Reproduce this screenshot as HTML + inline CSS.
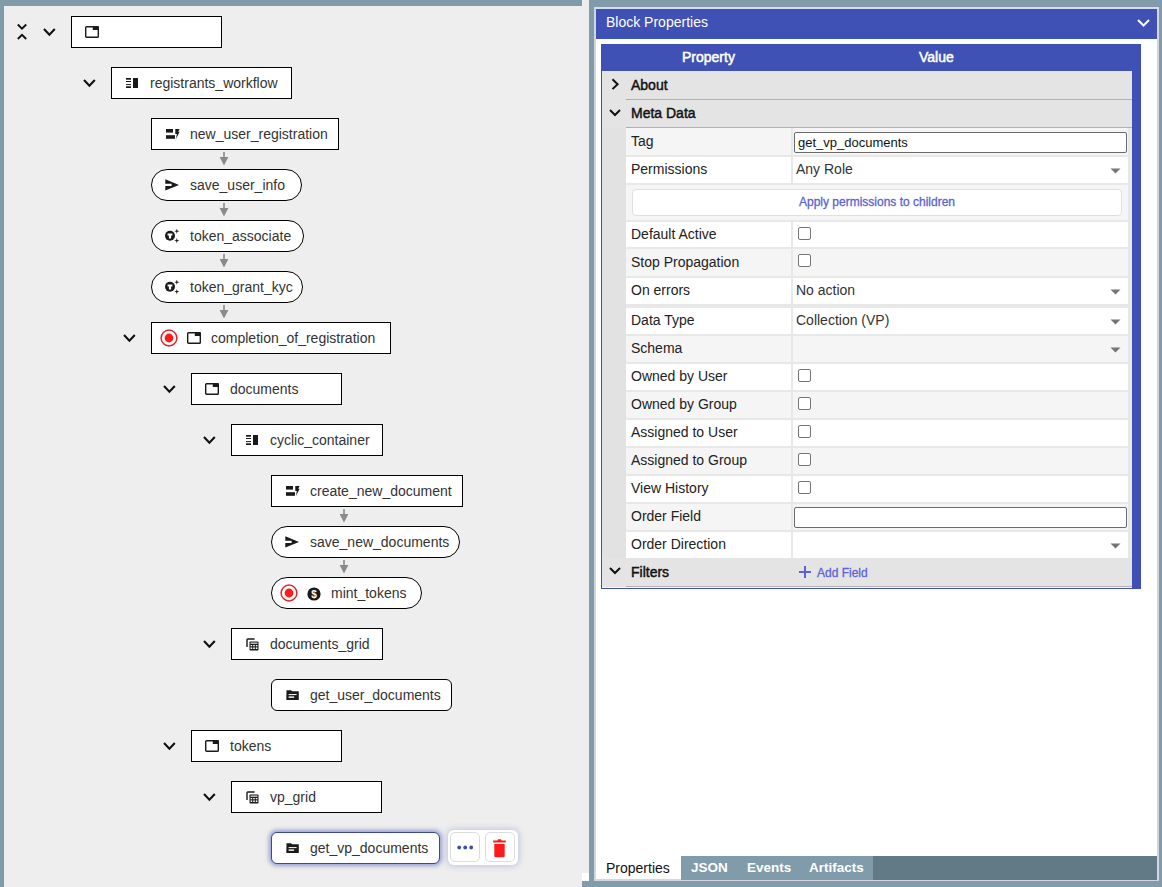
<!DOCTYPE html>
<html><head><meta charset="utf-8"><style>
*{box-sizing:border-box;margin:0;padding:0}
html,body{width:1162px;height:887px;overflow:hidden}
body{background:#809ba9;font-family:"Liberation Sans",sans-serif;position:relative;color:#333}
.abs{position:absolute}
#left{position:absolute;left:4px;top:6px;width:578px;height:881px;background:#eee}
#strip{position:absolute;left:582px;top:0;width:7px;height:873px;background:#eee}
#corner{position:absolute;left:582px;top:873px;width:7px;height:8px;background:#fff}
.node{position:absolute;height:32px;border:1px solid #000;background:#fff;font-size:14px;color:#333;white-space:nowrap}
.node .t{position:absolute;top:7px;line-height:16px}
.pill{border-radius:16px}
.r6{border-radius:6px}
.sel{border:1.5px solid #3a489e;box-shadow:0 0 4px 2px rgba(63,81,181,0.5)}
</style></head><body>
<div id="left"></div><div id="strip"></div><div id="corner"></div>
<div class="node " style="left:71px;top:16px;width:151px"><svg class="abs" style="left:13px;top:9px" width="14" height="12" viewBox="0 0 14 12"><rect x="0.7" y="0.7" width="12.6" height="10.6" rx="0.9" fill="none" stroke="#1a1a1a" stroke-width="1.4"/><rect x="7.8" y="0.2" width="6" height="3.8" fill="#1a1a1a"/></svg></div>
<svg class="abs" style="left:42.8px;top:28.2px" width="12.8" height="8.8" viewBox="0 0 12.8 8.8"><path d="M1 1 L6.4 6.8 L11.8 1" fill="none" stroke="#111" stroke-width="2.1"/></svg>
<div class="node " style="left:111px;top:67px;width:181px"><svg class="abs" style="left:14px;top:10px" width="13" height="10" viewBox="0 0 13 10"><rect x="0" y="0" width="5" height="1.7" fill="#1a1a1a"/><rect x="0" y="3" width="5" height="1" fill="#1a1a1a"/><rect x="0" y="6.1" width="5" height="1" fill="#1a1a1a"/><rect x="0" y="8.3" width="5" height="1.7" fill="#1a1a1a"/><rect x="7" y="0" width="5" height="10" fill="#1a1a1a"/></svg><span class="t" style="left:38px">registrants_workflow</span></div>
<svg class="abs" style="left:82.8px;top:79.2px" width="12.8" height="8.8" viewBox="0 0 12.8 8.8"><path d="M1 1 L6.4 6.8 L11.8 1" fill="none" stroke="#111" stroke-width="2.1"/></svg>
<div class="node " style="left:151px;top:118px;width:188px"><svg class="abs" style="left:14px;top:10px" width="14" height="10" viewBox="0 0 14 10"><rect x="0" y="0" width="7" height="3.6" fill="#1a1a1a"/><rect x="0" y="6.2" width="9" height="3.6" fill="#1a1a1a"/><path d="M9.3 0 H13.6 L12.2 2.8 H13.6 L10 10 L10.8 5 H9.3 Z" fill="#1a1a1a"/></svg><span class="t" style="left:38px">new_user_registration</span></div>
<svg class="abs" style="left:219px;top:151px" width="10" height="16" viewBox="0 0 10 16"><rect x="4.2" y="1" width="1.6" height="6" fill="#8a8a8a"/><path d="M0.6 6 L9.4 6 L5 14.6 Z" fill="#8a8a8a"/></svg>
<div class="node pill" style="left:151px;top:169px;width:151px"><svg class="abs" style="left:13px;top:9px" width="14" height="12" viewBox="0 0 14 12"><path d="M0.3 0.2 L14 5.9 L0.3 11.6 V7.1 H6.6 V4.7 H0.3 Z" fill="#1a1a1a"/></svg><span class="t" style="left:38px">save_user_info</span></div>
<svg class="abs" style="left:219px;top:202px" width="10" height="16" viewBox="0 0 10 16"><rect x="4.2" y="1" width="1.6" height="6" fill="#8a8a8a"/><path d="M0.6 6 L9.4 6 L5 14.6 Z" fill="#8a8a8a"/></svg>
<div class="node pill" style="left:151px;top:220px;width:153px"><svg class="abs" style="left:13px;top:8px" width="16" height="15" viewBox="0 0 16 15"><circle cx="5" cy="6.8" r="5" fill="#1a1a1a"/><path d="M2.6 4.4 H7.4 V6.4 H6.1 V9.6 H3.9 V6.4 H2.6 Z" fill="#fff"/><path d="M11.8 -0.3999999999999999 L12.4 1.6 L14.4 2.2 L12.4 2.8000000000000003 L11.8 4.800000000000001 L11.200000000000001 2.8000000000000003 L9.200000000000001 2.2 L11.200000000000001 1.6 Z" fill="#1a1a1a"/><path d="M11.8 9.0 L12.4 11.0 L14.4 11.6 L12.4 12.2 L11.8 14.2 L11.200000000000001 12.2 L9.200000000000001 11.6 L11.200000000000001 11.0 Z" fill="#1a1a1a"/></svg><span class="t" style="left:38px">token_associate</span></div>
<svg class="abs" style="left:219px;top:253px" width="10" height="16" viewBox="0 0 10 16"><rect x="4.2" y="1" width="1.6" height="6" fill="#8a8a8a"/><path d="M0.6 6 L9.4 6 L5 14.6 Z" fill="#8a8a8a"/></svg>
<div class="node pill" style="left:151px;top:271px;width:152px"><svg class="abs" style="left:13px;top:8px" width="16" height="15" viewBox="0 0 16 15"><circle cx="5" cy="6.8" r="5" fill="#1a1a1a"/><path d="M2.6 4.4 H7.4 V6.4 H6.1 V9.6 H3.9 V6.4 H2.6 Z" fill="#fff"/><path d="M11.8 -0.3999999999999999 L12.4 1.6 L14.4 2.2 L12.4 2.8000000000000003 L11.8 4.800000000000001 L11.200000000000001 2.8000000000000003 L9.200000000000001 2.2 L11.200000000000001 1.6 Z" fill="#1a1a1a"/><path d="M11.8 9.0 L12.4 11.0 L14.4 11.6 L12.4 12.2 L11.8 14.2 L11.200000000000001 12.2 L9.200000000000001 11.6 L11.200000000000001 11.0 Z" fill="#1a1a1a"/></svg><span class="t" style="left:38px">token_grant_kyc</span></div>
<svg class="abs" style="left:219px;top:304px" width="10" height="16" viewBox="0 0 10 16"><rect x="4.2" y="1" width="1.6" height="6" fill="#8a8a8a"/><path d="M0.6 6 L9.4 6 L5 14.6 Z" fill="#8a8a8a"/></svg>
<div class="node " style="left:151px;top:322px;width:240px"><svg class="abs" style="left:7.5px;top:5.8px" width="18" height="18" viewBox="0 0 18 18"><circle cx="9" cy="9" r="7.9" fill="none" stroke="#e0242c" stroke-width="1.5"/><circle cx="9" cy="9" r="4.4" fill="#ff1a1a"/></svg><svg class="abs" style="left:35px;top:9px" width="14" height="12" viewBox="0 0 14 12"><rect x="0.7" y="0.7" width="12.6" height="10.6" rx="0.9" fill="none" stroke="#1a1a1a" stroke-width="1.4"/><rect x="7.8" y="0.2" width="6" height="3.8" fill="#1a1a1a"/></svg><span class="t" style="left:59px">completion_of_registration</span></div>
<svg class="abs" style="left:122.8px;top:334.2px" width="12.8" height="8.8" viewBox="0 0 12.8 8.8"><path d="M1 1 L6.4 6.8 L11.8 1" fill="none" stroke="#111" stroke-width="2.1"/></svg>
<div class="node " style="left:191px;top:373px;width:151px"><svg class="abs" style="left:13px;top:9px" width="14" height="12" viewBox="0 0 14 12"><rect x="0.7" y="0.7" width="12.6" height="10.6" rx="0.9" fill="none" stroke="#1a1a1a" stroke-width="1.4"/><rect x="7.8" y="0.2" width="6" height="3.8" fill="#1a1a1a"/></svg><span class="t" style="left:38px">documents</span></div>
<svg class="abs" style="left:162.8px;top:385.2px" width="12.8" height="8.8" viewBox="0 0 12.8 8.8"><path d="M1 1 L6.4 6.8 L11.8 1" fill="none" stroke="#111" stroke-width="2.1"/></svg>
<div class="node " style="left:231px;top:424px;width:152px"><svg class="abs" style="left:14px;top:10px" width="13" height="10" viewBox="0 0 13 10"><rect x="0" y="0" width="5" height="1.7" fill="#1a1a1a"/><rect x="0" y="3" width="5" height="1" fill="#1a1a1a"/><rect x="0" y="6.1" width="5" height="1" fill="#1a1a1a"/><rect x="0" y="8.3" width="5" height="1.7" fill="#1a1a1a"/><rect x="7" y="0" width="5" height="10" fill="#1a1a1a"/></svg><span class="t" style="left:38px">cyclic_container</span></div>
<svg class="abs" style="left:202.8px;top:436.2px" width="12.8" height="8.8" viewBox="0 0 12.8 8.8"><path d="M1 1 L6.4 6.8 L11.8 1" fill="none" stroke="#111" stroke-width="2.1"/></svg>
<div class="node " style="left:271px;top:475px;width:192px"><svg class="abs" style="left:14px;top:10px" width="14" height="10" viewBox="0 0 14 10"><rect x="0" y="0" width="7" height="3.6" fill="#1a1a1a"/><rect x="0" y="6.2" width="9" height="3.6" fill="#1a1a1a"/><path d="M9.3 0 H13.6 L12.2 2.8 H13.6 L10 10 L10.8 5 H9.3 Z" fill="#1a1a1a"/></svg><span class="t" style="left:38px">create_new_document</span></div>
<svg class="abs" style="left:339px;top:508px" width="10" height="16" viewBox="0 0 10 16"><rect x="4.2" y="1" width="1.6" height="6" fill="#8a8a8a"/><path d="M0.6 6 L9.4 6 L5 14.6 Z" fill="#8a8a8a"/></svg>
<div class="node pill" style="left:271px;top:526px;width:189px"><svg class="abs" style="left:13px;top:9px" width="14" height="12" viewBox="0 0 14 12"><path d="M0.3 0.2 L14 5.9 L0.3 11.6 V7.1 H6.6 V4.7 H0.3 Z" fill="#1a1a1a"/></svg><span class="t" style="left:38px">save_new_documents</span></div>
<svg class="abs" style="left:339px;top:559px" width="10" height="16" viewBox="0 0 10 16"><rect x="4.2" y="1" width="1.6" height="6" fill="#8a8a8a"/><path d="M0.6 6 L9.4 6 L5 14.6 Z" fill="#8a8a8a"/></svg>
<div class="node pill" style="left:271px;top:577px;width:151px"><svg class="abs" style="left:7.5px;top:5.8px" width="18" height="18" viewBox="0 0 18 18"><circle cx="9" cy="9" r="7.9" fill="none" stroke="#e0242c" stroke-width="1.5"/><circle cx="9" cy="9" r="4.4" fill="#ff1a1a"/></svg><svg class="abs" style="left:35.3px;top:8.5px" width="14" height="14" viewBox="0 0 14 14"><circle cx="7" cy="7" r="6.6" fill="#1a1a1a"/><text x="7" y="10.6" text-anchor="middle" font-family='"Liberation Sans",sans-serif' font-weight="bold" font-size="10" fill="#fff">$</text></svg><span class="t" style="left:59px">mint_tokens</span></div>
<div class="node " style="left:231px;top:628px;width:152px"><svg class="abs" style="left:14px;top:9px" width="13" height="13" viewBox="0 0 13 13"><path d="M1 9 V1.8 Q1 1 1.8 1 H8.6" fill="none" stroke="#1a1a1a" stroke-width="1.4"/><rect x="3.5" y="3.5" width="9" height="9" rx="0.8" fill="#1a1a1a"/><rect x="4.5" y="4.6" width="7" height="1.1" fill="#fff"/><rect x="4.6" y="7" width="1.6" height="1.3" fill="#fff"/><rect x="7.2" y="7" width="1.6" height="1.3" fill="#fff"/><rect x="9.8" y="7" width="1.6" height="1.3" fill="#fff"/><rect x="4.6" y="9.4" width="1.6" height="1.6" fill="#fff"/><rect x="7.2" y="9.4" width="1.6" height="1.6" fill="#fff"/><rect x="9.8" y="9.4" width="1.6" height="1.6" fill="#fff"/></svg><span class="t" style="left:38px">documents_grid</span></div>
<svg class="abs" style="left:202.8px;top:640.2px" width="12.8" height="8.8" viewBox="0 0 12.8 8.8"><path d="M1 1 L6.4 6.8 L11.8 1" fill="none" stroke="#111" stroke-width="2.1"/></svg>
<div class="node r6" style="left:271px;top:679px;width:181px"><svg class="abs" style="left:14px;top:10px" width="13" height="10" viewBox="0 0 13 10"><path d="M0.5 0.3 H5 L6.2 1.3 H12.3 Q12.8 1.3 12.8 1.8 V9.4 Q12.8 9.9 12.3 9.9 H0.8 Q0.3 9.9 0.3 9.4 Z" fill="#1a1a1a"/><rect x="2.6" y="4.1" width="8" height="1" fill="#fff"/><rect x="2.6" y="6.4" width="5.5" height="1.4" fill="#fff"/></svg><span class="t" style="left:38px">get_user_documents</span></div>
<div class="node " style="left:191px;top:730px;width:151px"><svg class="abs" style="left:13px;top:9px" width="14" height="12" viewBox="0 0 14 12"><rect x="0.7" y="0.7" width="12.6" height="10.6" rx="0.9" fill="none" stroke="#1a1a1a" stroke-width="1.4"/><rect x="7.8" y="0.2" width="6" height="3.8" fill="#1a1a1a"/></svg><span class="t" style="left:38px">tokens</span></div>
<svg class="abs" style="left:162.8px;top:742.2px" width="12.8" height="8.8" viewBox="0 0 12.8 8.8"><path d="M1 1 L6.4 6.8 L11.8 1" fill="none" stroke="#111" stroke-width="2.1"/></svg>
<div class="node " style="left:231px;top:781px;width:151px"><svg class="abs" style="left:14px;top:9px" width="13" height="13" viewBox="0 0 13 13"><path d="M1 9 V1.8 Q1 1 1.8 1 H8.6" fill="none" stroke="#1a1a1a" stroke-width="1.4"/><rect x="3.5" y="3.5" width="9" height="9" rx="0.8" fill="#1a1a1a"/><rect x="4.5" y="4.6" width="7" height="1.1" fill="#fff"/><rect x="4.6" y="7" width="1.6" height="1.3" fill="#fff"/><rect x="7.2" y="7" width="1.6" height="1.3" fill="#fff"/><rect x="9.8" y="7" width="1.6" height="1.3" fill="#fff"/><rect x="4.6" y="9.4" width="1.6" height="1.6" fill="#fff"/><rect x="7.2" y="9.4" width="1.6" height="1.6" fill="#fff"/><rect x="9.8" y="9.4" width="1.6" height="1.6" fill="#fff"/></svg><span class="t" style="left:38px">vp_grid</span></div>
<svg class="abs" style="left:202.8px;top:793.2px" width="12.8" height="8.8" viewBox="0 0 12.8 8.8"><path d="M1 1 L6.4 6.8 L11.8 1" fill="none" stroke="#111" stroke-width="2.1"/></svg>
<div class="node r6 sel" style="left:271px;top:832px;width:169px"><svg class="abs" style="left:14px;top:10px" width="13" height="10" viewBox="0 0 13 10"><path d="M0.5 0.3 H5 L6.2 1.3 H12.3 Q12.8 1.3 12.8 1.8 V9.4 Q12.8 9.9 12.3 9.9 H0.8 Q0.3 9.9 0.3 9.4 Z" fill="#1a1a1a"/><rect x="2.6" y="4.1" width="8" height="1" fill="#fff"/><rect x="2.6" y="6.4" width="5.5" height="1.4" fill="#fff"/></svg><span class="t" style="left:38px">get_vp_documents</span></div>
<svg class="abs" style="left:16px;top:23px" width="12" height="18" viewBox="0 0 12 18"><path d="M1.8 1.5 L6 5.6 L10.2 1.5" fill="none" stroke="#111" stroke-width="1.9"/><path d="M1.8 16 L6 11.8 L10.2 16" fill="none" stroke="#111" stroke-width="1.9"/></svg>
<div class="abs" style="left:448px;top:830px;width:70px;height:35px;background:#fff;border-radius:6px;box-shadow:0 0 6px 1px rgba(63,81,181,0.28)"></div>
<div class="abs" style="left:450px;top:832px;width:30px;height:30px;border:1px solid #dcdcdc;border-radius:5px;background:#fff"><svg class="abs" style="left:6.2px;top:12.4px" width="16" height="5" viewBox="0 0 16 5"><circle cx="2.2" cy="2.5" r="1.9" fill="#3f4fa8"/><circle cx="8.2" cy="2.5" r="1.9" fill="#3f4fa8"/><circle cx="14.2" cy="2.5" r="1.9" fill="#3f4fa8"/></svg></div>
<div class="abs" style="left:485px;top:832px;width:30px;height:30px;border:1px solid #dcdcdc;border-radius:5px;background:#fff"><svg class="abs" style="left:6.4px;top:6px" width="15" height="19" viewBox="0 0 15 19"><path d="M5.5 1.2 Q5.5 0.3 6.4 0.3 H8.6 Q9.5 0.3 9.5 1.2 V1.6 H13.8 V3.6 H1.2 V1.6 H5.5 Z" fill="#ff1a1a"/><path d="M2.3 5 H12.7 V16.8 Q12.7 18.3 11.2 18.3 H3.8 Q2.3 18.3 2.3 16.8 Z" fill="#ff1a1a"/></svg></div>
<div class="abs" style="left:594px;top:7px;width:565px;height:874px;background:#fff;border:2px solid #d6dbf2;border-left-color:#d3d6de;border-right-color:#d3d6de;border-bottom-color:#d3d6de"></div>
<div class="abs" style="left:596px;top:9px;width:561px;height:30px;background:#3f51b5"></div>
<div class="abs" style="left:606px;top:14px;font-size:14px;line-height:16px;color:#fff">Block Properties</div>
<svg class="abs" style="left:1137px;top:19px" width="13" height="8.5" viewBox="0 0 13 8.5"><path d="M1 1 L6.5 6.5 L12 1" fill="none" stroke="#fff" stroke-width="2"/></svg>
<div class="abs" style="left:601px;top:44px;width:540px;height:545px;background:#3f51b5"></div>
<div class="abs" style="left:602px;top:71px;width:530px;height:517px;background:#e8e8e8"></div>
<div class="abs" style="left:602px;top:128px;width:24px;height:430px;background:#e2e2e2"></div>
<div class="abs" style="left:682px;top:49px;font-size:14px;line-height:16px;color:#fff;-webkit-text-stroke:0.5px #fff">Property</div>
<div class="abs" style="left:919px;top:49px;font-size:14px;line-height:16px;color:#fff;-webkit-text-stroke:0.5px #fff">Value</div>
<div class="abs" style="left:602px;top:71px;width:530px;height:29px;background:#e4e4e4"></div><div class="abs" style="left:626px;top:99px;width:506px;height:1px;background:#b0b0b0"></div><div class="abs" style="left:631px;top:77px;font-size:14px;line-height:16px;color:#111;-webkit-text-stroke:0.45px #111">About</div><svg class="abs" style="left:611px;top:77.5px" width="9" height="13" viewBox="0 0 9 13"><path d="M1.5 1.3 L6.6 6.2 L1.5 11.1" fill="none" stroke="#111" stroke-width="2"/></svg>
<div class="abs" style="left:602px;top:100px;width:530px;height:28px;background:#e4e4e4"></div><div class="abs" style="left:626px;top:127px;width:506px;height:1px;background:#b0b0b0"></div><div class="abs" style="left:631px;top:105px;font-size:14px;line-height:16px;color:#111;-webkit-text-stroke:0.45px #111">Meta Data</div><svg class="abs" style="left:609px;top:108.5px" width="12" height="8" viewBox="0 0 12 8"><path d="M1 1 L6.0 6 L11 1" fill="none" stroke="#111" stroke-width="2"/></svg>
<div class="abs" style="left:626px;top:128px;width:502px;height:27px;background:#e8e8e8"></div>
<div class="abs" style="left:626px;top:128px;width:165px;height:27px;background:#f5f5f5"></div>
<div class="abs" style="left:793px;top:128px;width:335px;height:27px;background:#f5f5f5"></div>
<div class="abs" style="left:631px;top:133px;font-size:14px;line-height:16px;color:#222">Tag</div>
<div class="abs" style="left:794px;top:132px;width:333px;height:21px;background:#fff;border:1px solid #6a6a6a;border-radius:2px"></div>
<div class="abs" style="left:798px;top:135px;font-size:13px;line-height:15px;color:#111">get_vp_documents</div>
<div class="abs" style="left:626px;top:157px;width:502px;height:26px;background:#e8e8e8"></div>
<div class="abs" style="left:626px;top:157px;width:165px;height:26px;background:#fff"></div>
<div class="abs" style="left:793px;top:157px;width:335px;height:26px;background:#fff"></div>
<div class="abs" style="left:631px;top:161px;font-size:14px;line-height:16px;color:#222">Permissions</div>
<div class="abs" style="left:796px;top:161px;font-size:14px;line-height:16px;color:#333">Any Role</div>
<svg class="abs" style="left:1110px;top:168px" width="11" height="6" viewBox="0 0 11 6"><path d="M0.5 0.5 H10.5 L5.5 5.5 Z" fill="#757575"/></svg>
<div class="abs" style="left:626px;top:185px;width:502px;height:35px;background:#e8e8e8"></div>
<div class="abs" style="left:626px;top:185px;width:502px;height:35px;background:#f5f5f5"></div>
<div class="abs" style="left:632px;top:189px;width:490px;height:27px;background:#fff;border:1px solid #e0e0e0;border-radius:4px"></div>
<div class="abs" style="left:632px;top:195px;width:490px;text-align:center;font-size:12px;line-height:14px;color:#5c64d2;-webkit-text-stroke:0.3px #5c64d2">Apply permissions to children</div>
<div class="abs" style="left:626px;top:222px;width:502px;height:25px;background:#e8e8e8"></div>
<div class="abs" style="left:626px;top:222px;width:165px;height:25px;background:#fff"></div>
<div class="abs" style="left:793px;top:222px;width:335px;height:25px;background:#fff"></div>
<div class="abs" style="left:631px;top:226px;font-size:14px;line-height:16px;color:#222">Default Active</div>
<div class="abs" style="left:798px;top:227px;width:13px;height:13px;border:1px solid #767676;border-radius:2px;background:#fff"></div>
<div class="abs" style="left:626px;top:249px;width:502px;height:27px;background:#e8e8e8"></div>
<div class="abs" style="left:626px;top:249px;width:165px;height:27px;background:#f5f5f5"></div>
<div class="abs" style="left:793px;top:249px;width:335px;height:27px;background:#f5f5f5"></div>
<div class="abs" style="left:631px;top:254px;font-size:14px;line-height:16px;color:#222">Stop Propagation</div>
<div class="abs" style="left:798px;top:254px;width:13px;height:13px;border:1px solid #767676;border-radius:2px;background:#fff"></div>
<div class="abs" style="left:626px;top:278px;width:502px;height:26px;background:#e8e8e8"></div>
<div class="abs" style="left:626px;top:278px;width:165px;height:26px;background:#fff"></div>
<div class="abs" style="left:793px;top:278px;width:335px;height:26px;background:#fff"></div>
<div class="abs" style="left:631px;top:282px;font-size:14px;line-height:16px;color:#222">On errors</div>
<div class="abs" style="left:796px;top:282px;font-size:14px;line-height:16px;color:#333">No action</div>
<svg class="abs" style="left:1110px;top:289px" width="11" height="6" viewBox="0 0 11 6"><path d="M0.5 0.5 H10.5 L5.5 5.5 Z" fill="#757575"/></svg>
<div class="abs" style="left:626px;top:308px;width:502px;height:26px;background:#e8e8e8"></div>
<div class="abs" style="left:626px;top:308px;width:165px;height:26px;background:#fff"></div>
<div class="abs" style="left:793px;top:308px;width:335px;height:26px;background:#fff"></div>
<div class="abs" style="left:631px;top:312px;font-size:14px;line-height:16px;color:#222">Data Type</div>
<div class="abs" style="left:796px;top:312px;font-size:14px;line-height:16px;color:#333">Collection (VP)</div>
<svg class="abs" style="left:1110px;top:319px" width="11" height="6" viewBox="0 0 11 6"><path d="M0.5 0.5 H10.5 L5.5 5.5 Z" fill="#757575"/></svg>
<div class="abs" style="left:626px;top:336px;width:502px;height:26px;background:#e8e8e8"></div>
<div class="abs" style="left:626px;top:336px;width:165px;height:26px;background:#f5f5f5"></div>
<div class="abs" style="left:793px;top:336px;width:335px;height:26px;background:#f5f5f5"></div>
<div class="abs" style="left:631px;top:340px;font-size:14px;line-height:16px;color:#222">Schema</div>
<svg class="abs" style="left:1110px;top:347px" width="11" height="6" viewBox="0 0 11 6"><path d="M0.5 0.5 H10.5 L5.5 5.5 Z" fill="#757575"/></svg>
<div class="abs" style="left:626px;top:364px;width:502px;height:26px;background:#e8e8e8"></div>
<div class="abs" style="left:626px;top:364px;width:165px;height:26px;background:#fff"></div>
<div class="abs" style="left:793px;top:364px;width:335px;height:26px;background:#fff"></div>
<div class="abs" style="left:631px;top:368px;font-size:14px;line-height:16px;color:#222">Owned by User</div>
<div class="abs" style="left:798px;top:369px;width:13px;height:13px;border:1px solid #767676;border-radius:2px;background:#fff"></div>
<div class="abs" style="left:626px;top:392px;width:502px;height:26px;background:#e8e8e8"></div>
<div class="abs" style="left:626px;top:392px;width:165px;height:26px;background:#f5f5f5"></div>
<div class="abs" style="left:793px;top:392px;width:335px;height:26px;background:#f5f5f5"></div>
<div class="abs" style="left:631px;top:396px;font-size:14px;line-height:16px;color:#222">Owned by Group</div>
<div class="abs" style="left:798px;top:397px;width:13px;height:13px;border:1px solid #767676;border-radius:2px;background:#fff"></div>
<div class="abs" style="left:626px;top:420px;width:502px;height:26px;background:#e8e8e8"></div>
<div class="abs" style="left:626px;top:420px;width:165px;height:26px;background:#fff"></div>
<div class="abs" style="left:793px;top:420px;width:335px;height:26px;background:#fff"></div>
<div class="abs" style="left:631px;top:424px;font-size:14px;line-height:16px;color:#222">Assigned to User</div>
<div class="abs" style="left:798px;top:425px;width:13px;height:13px;border:1px solid #767676;border-radius:2px;background:#fff"></div>
<div class="abs" style="left:626px;top:448px;width:502px;height:26px;background:#e8e8e8"></div>
<div class="abs" style="left:626px;top:448px;width:165px;height:26px;background:#f5f5f5"></div>
<div class="abs" style="left:793px;top:448px;width:335px;height:26px;background:#f5f5f5"></div>
<div class="abs" style="left:631px;top:452px;font-size:14px;line-height:16px;color:#222">Assigned to Group</div>
<div class="abs" style="left:798px;top:453px;width:13px;height:13px;border:1px solid #767676;border-radius:2px;background:#fff"></div>
<div class="abs" style="left:626px;top:476px;width:502px;height:26px;background:#e8e8e8"></div>
<div class="abs" style="left:626px;top:476px;width:165px;height:26px;background:#fff"></div>
<div class="abs" style="left:793px;top:476px;width:335px;height:26px;background:#fff"></div>
<div class="abs" style="left:631px;top:480px;font-size:14px;line-height:16px;color:#222">View History</div>
<div class="abs" style="left:798px;top:481px;width:13px;height:13px;border:1px solid #767676;border-radius:2px;background:#fff"></div>
<div class="abs" style="left:626px;top:504px;width:502px;height:26px;background:#e8e8e8"></div>
<div class="abs" style="left:626px;top:504px;width:165px;height:26px;background:#f5f5f5"></div>
<div class="abs" style="left:793px;top:504px;width:335px;height:26px;background:#f5f5f5"></div>
<div class="abs" style="left:631px;top:508px;font-size:14px;line-height:16px;color:#222">Order Field</div>
<div class="abs" style="left:794px;top:507px;width:333px;height:21px;background:#fff;border:1px solid #6a6a6a;border-radius:2px"></div>
<div class="abs" style="left:626px;top:532px;width:502px;height:26px;background:#e8e8e8"></div>
<div class="abs" style="left:626px;top:532px;width:165px;height:26px;background:#fff"></div>
<div class="abs" style="left:793px;top:532px;width:335px;height:26px;background:#fff"></div>
<div class="abs" style="left:631px;top:536px;font-size:14px;line-height:16px;color:#222">Order Direction</div>
<svg class="abs" style="left:1110px;top:543px" width="11" height="6" viewBox="0 0 11 6"><path d="M0.5 0.5 H10.5 L5.5 5.5 Z" fill="#757575"/></svg>
<div class="abs" style="left:602px;top:558px;width:530px;height:29px;background:#e4e4e4"></div><div class="abs" style="left:626px;top:586px;width:506px;height:1px;background:#b0b0b0"></div><div class="abs" style="left:631px;top:564px;font-size:14px;line-height:16px;color:#111;-webkit-text-stroke:0.45px #111">Filters</div><svg class="abs" style="left:609px;top:566.5px" width="12" height="8" viewBox="0 0 12 8"><path d="M1 1 L6.0 6 L11 1" fill="none" stroke="#111" stroke-width="2"/></svg>
<svg class="abs" style="left:799px;top:566px" width="12" height="12" viewBox="0 0 12 12"><rect x="5" y="0" width="2" height="12" fill="#5c64d2"/><rect x="0" y="5" width="12" height="2" fill="#5c64d2"/></svg>
<div class="abs" style="left:817px;top:566px;font-size:12px;line-height:14px;color:#5c64d2;-webkit-text-stroke:0.3px #5c64d2">Add Field</div>
<div class="abs" style="left:602px;top:587px;width:530px;height:1px;background:#f6f6fb"></div>
<div class="abs" style="left:681px;top:856px;width:476px;height:24px;background:#617a86"></div>
<div class="abs" style="left:681px;top:856px;width:192px;height:24px;background:#809ba9"></div>
<div class="abs" style="left:606px;top:860px;font-size:14px;line-height:16px;color:#111">Properties</div>
<div class="abs" style="left:691px;top:860px;font-size:13.5px;font-weight:bold;line-height:16px;color:#fff">JSON</div>
<div class="abs" style="left:747px;top:860px;font-size:13.5px;font-weight:bold;line-height:16px;color:#fff">Events</div>
<div class="abs" style="left:809px;top:860px;font-size:13.5px;font-weight:bold;line-height:16px;color:#fff">Artifacts</div>
</body></html>
